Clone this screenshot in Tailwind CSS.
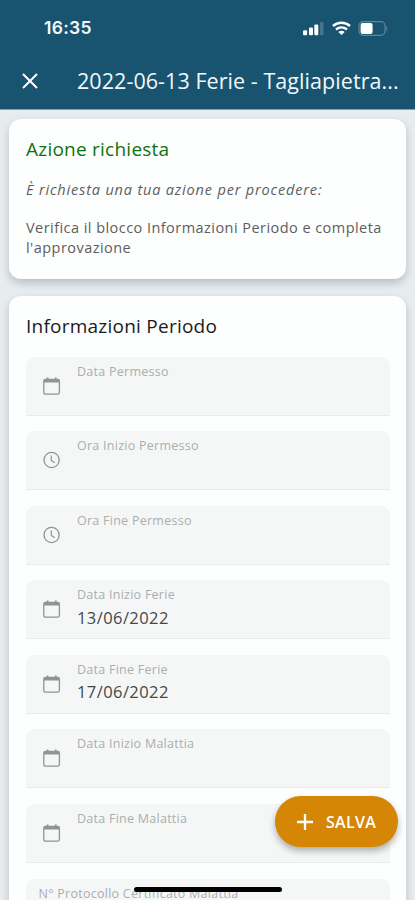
<!DOCTYPE html>
<html lang="it">
<head>
<meta charset="utf-8">
<meta name="viewport" content="width=device-width, initial-scale=1">
<title>Ferie</title>
<script src="https://cdn.jsdelivr.net/npm/@tailwindcss/browser@4"></script>
</head>
<body class="h-[900px] overflow-hidden bg-[#e7edef] font-['Open_Sans',sans-serif]">
<svg class="hidden">
  <symbol id="cal" viewBox="0 0 18 19"><path d="M4.600 .6v3M12.800 .6v3" stroke="currentColor" stroke-width="1.800"/><rect x=".8" y="2.300" width="15.600" height="14.900" rx="1.800" fill="none" stroke="currentColor" stroke-width="1.300"/><path d="M1 2.300h15.200v3.200H1z" fill="currentColor"/></symbol>
  <symbol id="clock" viewBox="0 0 18 19"><circle cx="8.600" cy="9" r="7.600" fill="none" stroke="currentColor" stroke-width="1.300"/><path d="M8.300 4.600v4.800l3.500 2.300" fill="none" stroke="currentColor" stroke-width="1.200"/></symbol>
</svg>
<div class="relative h-[900px] overflow-hidden">
  <header class="h-[110px] border-b border-[#7fa3b2] bg-[#18546f] text-[#f2f8fc]">
    <div class="flex h-[56px] items-center justify-between pl-[44px] pr-[27px]">
      <span class="pt-px font-['Inter',sans-serif] text-[17.500px] font-semibold tracking-[0.300px]">16:35</span>
      <div class="flex items-center">
        <svg class="h-[15px] w-[22px]" viewBox="0 0 22 15" fill="#fff"><rect x="0" y="9.200" width="4.200" height="5" rx="1.300"/><rect x="6" y="6.500" width="4" height="7.700" rx="1.200"/><rect x="11.300" y="3.500" width="4" height="10.700" rx="1.200"/><rect x="17" y="1" width="3.500" height="13.200" rx="1.200" fill-opacity=".2"/></svg>
        <svg class="ml-[7px] h-[15px] w-[19px]" viewBox="0 0 19 15" fill="none" stroke="#fff" stroke-width="2.400"><path d="M1 5C5.800 .6 13.200 .6 18 5M4 8.500c3.200-2.900 7.800-2.900 11 0"/><path d="M6.300 10.900c1.900-1.500 4.500-1.500 6.400 0L9.500 14z" fill="#fff" stroke="none"/></svg>
        <svg class="ml-[7px] h-[15px] w-[30px]" viewBox="0 0 30 15"><rect x="1" y=".7" width="26" height="13.600" rx="4" fill="none" stroke="#5d869a" stroke-width="1.200"/><rect x="2.600" y="2" width="12" height="11" rx="2" fill="#fff"/><path d="M28.200 5v5c1.500-.6 1.500-4.400 0-5" fill="#5d869a"/></svg>
      </div>
    </div>
    <div class="flex h-[50px] items-center pl-[22px]">
      <svg class="h-4 w-4" viewBox="0 0 16 16" stroke="#fff" stroke-width="2"><path d="M1 1l14 14M15 1L1 15"/></svg>
      <h1 class="ml-[39px] whitespace-nowrap text-[21.500px] tracking-[0.060px]">2022-06-13 Ferie - Tagliapietra...</h1>
    </div>
  </header>
  <main class="px-[9px] pt-[9px]">
    <section class="h-[160px] rounded-[12px] bg-[#fdfefe] px-[17px] pt-[16px] shadow-[0_4px_9px_rgba(0,0,0,0.2)]">
      <h2 class="text-[19px] leading-[28px] tracking-[0.240px] text-[#0c720e]">Azione richiesta</h2>
      <p class="mt-[17px] whitespace-nowrap text-[14.500px] italic leading-[20px] tracking-[0.830px] text-[#5d5d5d]">È richiesta una tua azione per procedere:</p>
      <p class="mt-[18px] whitespace-nowrap text-[14.500px] leading-[20px] tracking-[0.450px] text-[#5d5d5d]">Verifica il blocco Informazioni Periodo e completa<br>l'approvazione</p>
    </section>
    <section class="mt-[17px] h-[640px] rounded-t-[12px] bg-[#fdfefe] px-[17px] pt-[16px] shadow-[0_4px_9px_rgba(0,0,0,0.2)]">
      <h2 class="text-[19px] leading-[28px] tracking-[0.240px] text-[#1b1b1b]">Informazioni Periodo</h2>
      <div class="mt-[16.500px] flex w-[364px] flex-col gap-[15.600px] text-[12.500px] leading-[18px] tracking-[0.260px] text-[#aaaeae]">
        <div class="flex h-[59px] rounded-t-[9px] border-b border-[#e9ebeb] bg-[#f5f7f7] pl-[17px]"><svg class="mt-[20px] h-[19px] w-[18px] text-[#929494]"><use href="#cal"/></svg><div class="ml-[16px] pt-[6px]">Data Permesso</div></div>
        <div class="flex h-[59px] rounded-t-[9px] border-b border-[#e9ebeb] bg-[#f5f7f7] pl-[17px]"><svg class="mt-[20px] h-[19px] w-[18px] text-[#929494]"><use href="#clock"/></svg><div class="ml-[16px] pt-[6px]">Ora Inizio Permesso</div></div>
        <div class="flex h-[59px] rounded-t-[9px] border-b border-[#e9ebeb] bg-[#f5f7f7] pl-[17px]"><svg class="mt-[20px] h-[19px] w-[18px] text-[#929494]"><use href="#clock"/></svg><div class="ml-[16px] pt-[6px]">Ora Fine Permesso</div></div>
        <div class="flex h-[59px] rounded-t-[9px] border-b border-[#e9ebeb] bg-[#f5f7f7] pl-[17px]"><svg class="mt-[20px] h-[19px] w-[18px] text-[#929494]"><use href="#cal"/></svg><div class="ml-[16px] pt-[6px]">Data Inizio Ferie<div class="mt-[2.500px] text-[16.500px] leading-[22px] tracking-[0.420px] text-[#454747]">13/06/2022</div></div></div>
        <div class="flex h-[59px] rounded-t-[9px] border-b border-[#e9ebeb] bg-[#f5f7f7] pl-[17px]"><svg class="mt-[20px] h-[19px] w-[18px] text-[#929494]"><use href="#cal"/></svg><div class="ml-[16px] pt-[6px]">Data Fine Ferie<div class="mt-[2.500px] text-[16.500px] leading-[22px] tracking-[0.420px] text-[#454747]">17/06/2022</div></div></div>
        <div class="flex h-[59px] rounded-t-[9px] border-b border-[#e9ebeb] bg-[#f5f7f7] pl-[17px]"><svg class="mt-[20px] h-[19px] w-[18px] text-[#929494]"><use href="#cal"/></svg><div class="ml-[16px] pt-[6px]">Data Inizio Malattia</div></div>
        <div class="flex h-[59px] rounded-t-[9px] border-b border-[#e9ebeb] bg-[#f5f7f7] pl-[17px]"><svg class="mt-[20px] h-[19px] w-[18px] text-[#929494]"><use href="#cal"/></svg><div class="ml-[16px] pt-[6px]">Data Fine Malattia</div></div>
        <div class="h-[59px] rounded-t-[9px] bg-[#f5f7f7] pl-[12.500px] pt-[6px]">N° Protocollo Certificato Malattia</div>
      </div>
    </section>
  </main>
  <button class="absolute left-[275px] top-[796px] flex h-[51px] w-[123px] items-center rounded-full bg-[#d48604] pl-[22px] text-white shadow-[0_4px_7px_rgba(0,0,0,0.3)]">
    <svg class="h-4 w-4" viewBox="0 0 16 16" stroke="#fff" stroke-width="2.300"><path d="M0 8h16M8 0v16"/></svg>
    <span class="ml-[13px] text-[16px] font-semibold tracking-[0.300px]">SALVA</span>
  </button>
  <div class="absolute left-[134px] top-[887px] h-[5px] w-[148px] rounded-full bg-black"></div>
</div>
</body>
</html>
